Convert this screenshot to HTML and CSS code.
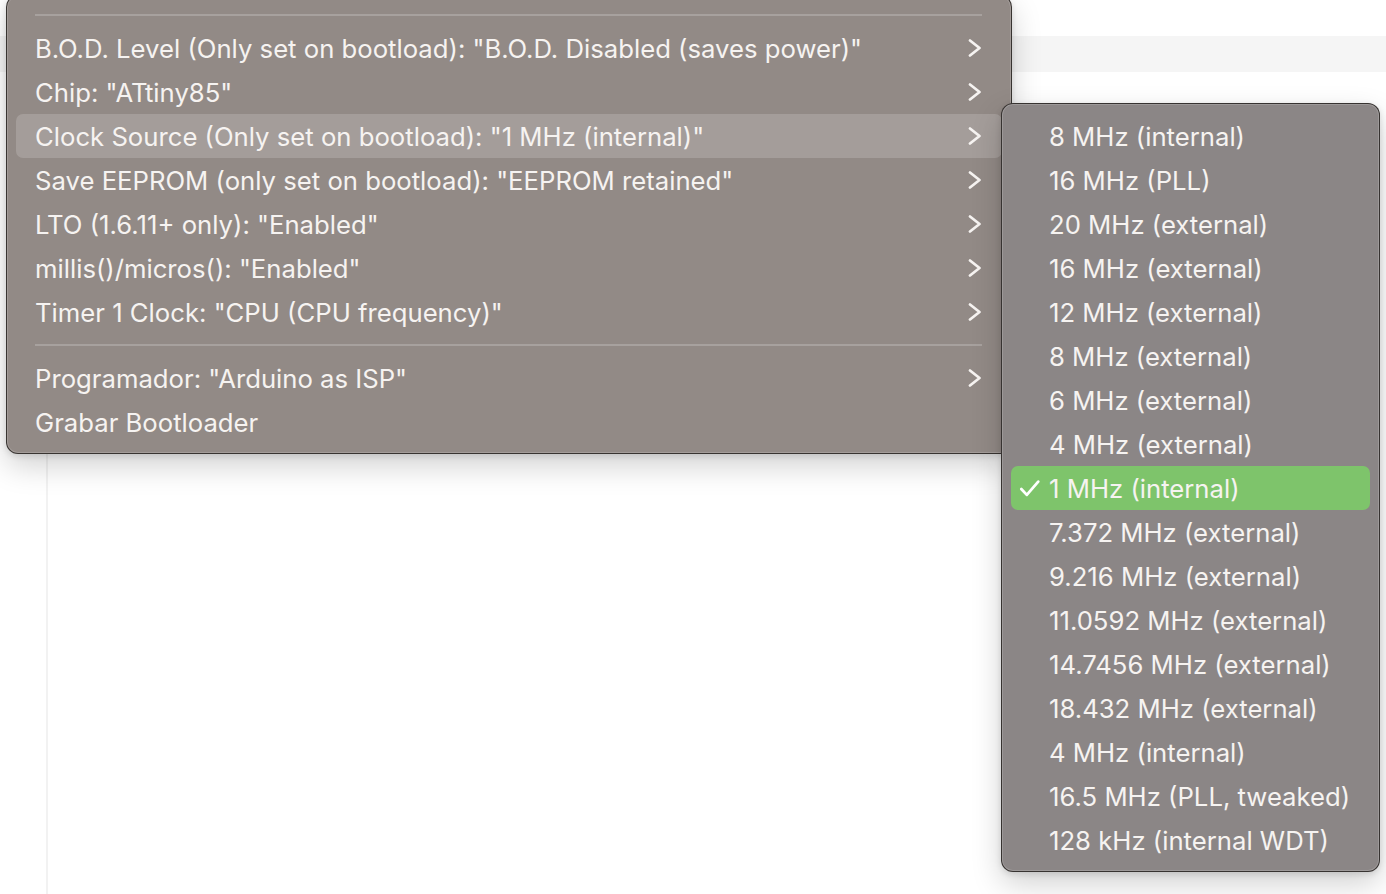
FILE: index.html
```html
<!DOCTYPE html>
<html lang="es">
<head>
<meta charset="utf-8">
<title>Menu</title>
<link rel="stylesheet" href="styles.css">
</head>
<body>
<div class="app">
  <div class="topbar"></div>
  <div class="tabbar"></div>
  <div class="content">
    <div class="gutter"></div>
    <div class="editor"></div>
  </div>

  <div class="menu main-menu">
    <div class="sep"></div>
    <div class="item"><span class="label">B.O.D. Level (Only set on bootload): "B.O.D. Disabled (saves power)"</span><svg class="chev" viewBox="0 0 14 18"><path d="M2 1.5 L11.5 9 L2 16.5"/></svg></div>
    <div class="item"><span class="label">Chip: "ATtiny85"</span><svg class="chev" viewBox="0 0 14 18"><path d="M2 1.5 L11.5 9 L2 16.5"/></svg></div>
    <div class="item active"><span class="label">Clock Source (Only set on bootload): "1 MHz (internal)"</span><svg class="chev" viewBox="0 0 14 18"><path d="M2 1.5 L11.5 9 L2 16.5"/></svg></div>
    <div class="item"><span class="label">Save EEPROM (only set on bootload): "EEPROM retained"</span><svg class="chev" viewBox="0 0 14 18"><path d="M2 1.5 L11.5 9 L2 16.5"/></svg></div>
    <div class="item"><span class="label">LTO (1.6.11+ only): "Enabled"</span><svg class="chev" viewBox="0 0 14 18"><path d="M2 1.5 L11.5 9 L2 16.5"/></svg></div>
    <div class="item"><span class="label">millis()/micros(): "Enabled"</span><svg class="chev" viewBox="0 0 14 18"><path d="M2 1.5 L11.5 9 L2 16.5"/></svg></div>
    <div class="item"><span class="label">Timer 1 Clock: "CPU (CPU frequency)"</span><svg class="chev" viewBox="0 0 14 18"><path d="M2 1.5 L11.5 9 L2 16.5"/></svg></div>
    <div class="sep"></div>
    <div class="item"><span class="label">Programador: "Arduino as ISP"</span><svg class="chev" viewBox="0 0 14 18"><path d="M2 1.5 L11.5 9 L2 16.5"/></svg></div>
    <div class="item"><span class="label">Grabar Bootloader</span></div>
  </div>

  <div class="menu sub-menu">
    <div class="sitem"><span class="check"></span><span class="label">8 MHz (internal)</span></div>
    <div class="sitem"><span class="check"></span><span class="label">16 MHz (PLL)</span></div>
    <div class="sitem"><span class="check"></span><span class="label">20 MHz (external)</span></div>
    <div class="sitem"><span class="check"></span><span class="label">16 MHz (external)</span></div>
    <div class="sitem"><span class="check"></span><span class="label">12 MHz (external)</span></div>
    <div class="sitem"><span class="check"></span><span class="label">8 MHz (external)</span></div>
    <div class="sitem"><span class="check"></span><span class="label">6 MHz (external)</span></div>
    <div class="sitem"><span class="check"></span><span class="label">4 MHz (external)</span></div>
    <div class="sitem selected"><span class="check"><svg viewBox="0 0 24 20"><path d="M2.5 10.5 L8.5 17 L21 2.5"/></svg></span><span class="label">1 MHz (internal)</span></div>
    <div class="sitem"><span class="check"></span><span class="label">7.372 MHz (external)</span></div>
    <div class="sitem"><span class="check"></span><span class="label">9.216 MHz (external)</span></div>
    <div class="sitem"><span class="check"></span><span class="label">11.0592 MHz (external)</span></div>
    <div class="sitem"><span class="check"></span><span class="label">14.7456 MHz (external)</span></div>
    <div class="sitem"><span class="check"></span><span class="label">18.432 MHz (external)</span></div>
    <div class="sitem"><span class="check"></span><span class="label">4 MHz (internal)</span></div>
    <div class="sitem"><span class="check"></span><span class="label">16.5 MHz (PLL, tweaked)</span></div>
    <div class="sitem"><span class="check"></span><span class="label">128 kHz (internal WDT)</span></div>
  </div>
</div>
</body>
</html>
```

FILE: styles.css
```css
html, body {
  margin: 0;
  padding: 0;
  width: 1386px;
  height: 894px;
  overflow: hidden;
  background: #ffffff;
  font-family: Inter, "Noto Sans", "Liberation Sans", sans-serif;
}

.app {
  position: relative;
  width: 1386px;
  height: 894px;
  display: flex;
  flex-direction: column;
  overflow: hidden;
}

.topbar {
  height: 36px;
  background: #ffffff;
}

.tabbar {
  height: 36px;
  background: #f5f5f5;
}

.content {
  flex: 1;
  display: flex;
}

.gutter {
  width: 46px;
  border-right: 2px solid #f2f2f2;
}

.editor {
  flex: 1;
  background: #ffffff;
}

.menu {
  position: absolute;
  box-sizing: border-box;
  border: 1px solid rgba(40, 36, 34, 0.85);
  box-shadow: inset 0 0 0 1px rgba(255, 255, 255, 0.16), 0 12px 30px rgba(0, 0, 0, 0.18), 0 2px 6px rgba(0, 0, 0, 0.12);
  color: #f6f3f1;
  font-size: 25.7px;
}

.main-menu {
  left: 6px;
  top: -5px;
  width: 1006px;
  height: 459px;
  background: #928a86;
  border-radius: 12px;
  padding: 8px 9px;
}

.sep {
  height: 22px;
  display: flex;
  align-items: center;
  padding: 0 20px 0 19px;
}

.sep::before {
  content: "";
  flex: 1;
  height: 2px;
  background: rgba(255, 255, 255, 0.2);
}

.item {
  height: 44px;
  box-sizing: border-box;
  padding: 1px 20px 0 19px;
  display: flex;
  align-items: center;
  justify-content: space-between;
  border-radius: 7px;
  white-space: nowrap;
}

.item.active {
  background: rgba(255, 255, 255, 0.17);
}

.chev {
  width: 14px;
  height: 18px;
  margin-top: -1px;
  fill: none;
  stroke: #f6f3f1;
  stroke-width: 2.7;
  stroke-linecap: round;
  stroke-linejoin: round;
}

.sub-menu {
  left: 1001px;
  top: 103px;
  width: 379px;
  height: 769px;
  background: #8b8686;
  border-radius: 12px;
  padding: 10px 9px;
}

.sitem {
  height: 44px;
  box-sizing: border-box;
  padding-top: 1px;
  display: flex;
  align-items: center;
  border-radius: 7px;
  white-space: nowrap;
}

.sitem.selected {
  background: #7ec46b;
}

.check {
  width: 38px;
  height: 42px;
  display: flex;
  align-items: center;
  padding-left: 8px;
  box-sizing: border-box;
}

.check svg {
  width: 22px;
  height: 19px;
  fill: none;
  stroke: #ffffff;
  stroke-width: 3;
  stroke-linecap: round;
  stroke-linejoin: round;
}
```
